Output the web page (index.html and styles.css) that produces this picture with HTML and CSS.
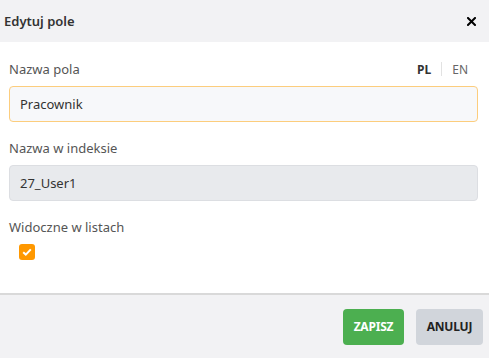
FILE: index.html
```html
<!DOCTYPE html>
<html lang="pl">
<head>
<meta charset="utf-8">
<link rel="stylesheet" href="styles.css">
</head>
<body>
<div class="modal">
  <div class="header">
    <span class="title">Edytuj pole</span>
    <button class="close" aria-label="Zamknij">
      <svg width="9" height="9" viewBox="0 0 9 9"><path d="M1 1L8 8M8 1L1 8" stroke="#000" stroke-width="2" stroke-linecap="square"/></svg>
    </button>
  </div>
  <div class="body">
    <div class="field">
      <div class="label-row">
        <label class="label">Nazwa pola</label>
        <div class="langs"><span class="lang active">PL</span><span class="sep"></span><span class="lang">EN</span></div>
      </div>
      <div class="input focus">Pracownik</div>
    </div>
    <div class="field">
      <div class="label-row"><label class="label">Nazwa w indeksie</label></div>
      <div class="input disabled">27_User1</div>
    </div>
    <div class="field">
      <div class="label-row"><label class="label">Widoczne w listach</label></div>
      <div class="check">
        <svg width="10" height="8" viewBox="0 0 10 8"><path d="M1.2 4.2L3.8 6.6L8.8 1.4" fill="none" stroke="#fff" stroke-width="2"/></svg>
      </div>
    </div>
  </div>
  <div class="footer">
    <button class="btn save">ZAPISZ</button>
    <button class="btn cancel">ANULUJ</button>
  </div>
</div>
</body>
</html>
```
FILE: styles.css
```css
* { box-sizing: border-box; }
html, body { margin: 0; padding: 0; }
body {
  font-family: "Noto Sans", "Open Sans", sans-serif;
  font-size: 13px;
  color: #333;
  background: #fff;
  width: 489px;
  height: 358px;
  overflow: hidden;
}
.modal { display: flex; flex-direction: column; height: 358px; }
.header {
  height: 42px;
  background: #f2f2f4;
  display: flex;
  align-items: center;
  justify-content: space-between;
  padding: 0 13px 0 4px;
}
.title { font-size: 13px; font-weight: 600; color: #333; }
.close { border: 0; background: none; padding: 0; display: flex; }
.body {
  flex: 1;
  padding: 15px 11px 0 9px;
  display: flex;
  flex-direction: column;
}
.field { margin-bottom: 14px; }
.label-row {
  display: flex;
  justify-content: space-between;
  align-items: center;
  height: 24px;
  margin-bottom: 5px;
}
.label { color: #555; font-size: 13px; }
.langs { display: flex; align-items: center; gap: 10px; padding-right: 10px; font-size: 12px; }
.lang { color: #666; }
.lang.active { font-weight: 700; color: #333; }
.sep { width: 1px; height: 14px; background: #e2e2e2; }
.input {
  height: 36px;
  border-radius: 4px;
  padding: 0 10px;
  display: flex;
  align-items: center;
  font-size: 13px;
  color: #333;
}
.input.focus { border: 1px solid #fccd7d; background: #f7f8fa; }
.input.disabled { border: 1px solid #dcdee2; background: #e8eaed; }
.check {
  margin: 3px 0 0 10px;
  width: 16px;
  height: 16px;
  border-radius: 3px;
  background: #ff9800;
  display: flex;
  align-items: center;
  justify-content: center;
}
.footer {
  height: 65px;
  background: #f2f2f4;
  border-top: 2px solid #d9d9d9;
  display: flex;
  justify-content: flex-end;
  align-items: center;
  gap: 12px;
  padding: 0 6px 0 0;
}
.btn {
  border: 0;
  height: 36px;
  border-radius: 4px;
  font-family: "Noto Sans", sans-serif;
  font-weight: 700;
  font-size: 12px;
  padding: 0;
  letter-spacing: -0.2px;
}
.save { width: 61px; background: #4caf50; color: #fff; }
.cancel { width: 67px; background: #d1d5db; color: #222; }
```
